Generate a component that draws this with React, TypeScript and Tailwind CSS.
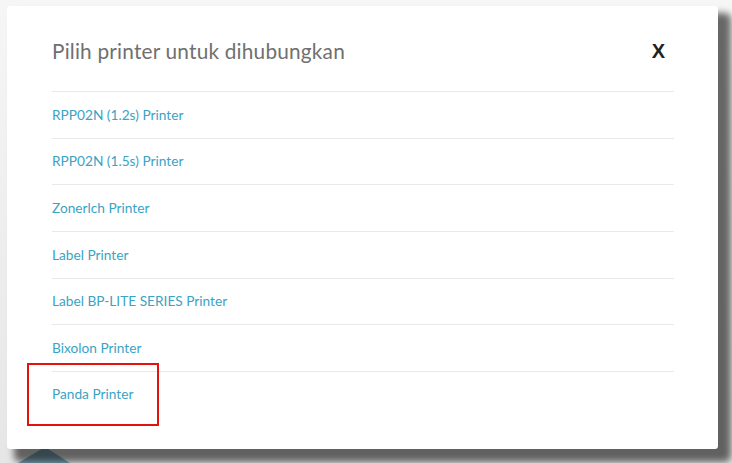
import React from "react";

const printers = [
  "RPP02N (1.2s) Printer",
  "RPP02N (1.5s) Printer",
  "Zonerlch Printer",
  "Label Printer",
  "Label BP-LITE SERIES Printer",
  "Bixolon Printer",
  "Panda Printer",
];

export default function App() {
  return (
    <div
      className="relative w-[732px] h-[463px] overflow-hidden bg-gradient-to-b from-[#f6f6f6] to-[#e6e6e6]"
      style={{ fontFamily: "Lato, 'Open Sans', sans-serif" }}
    >
      <svg className="absolute left-0 bottom-0" width="120" height="20" viewBox="0 0 120 20">
        <polygon points="18,20 45,4 70,20" fill="#7fa7b8" />
      </svg>
      <div className="relative ml-[7px] mt-[6px] w-[711px] h-[443px] bg-white rounded-[3px] shadow-[10px_10px_7px_3px_rgba(0,0,0,0.58)] pl-[45px] pr-[44px]">
        <div className="flex items-center justify-between h-[85px] pt-[4px]">
          <div className="text-[20.8px] text-[#707070] tracking-[0.2px]">Pilih printer untuk dihubungkan</div>
          <div className="mr-[9px] text-[20px] leading-none text-[#222] font-bold" style={{ fontFamily: "'Liberation Sans', Arial, sans-serif" }}>X</div>
        </div>
        <div className="flex flex-col">
          {printers.map((p) => (
            <div key={p} className="h-[46.667px] border-t border-[#e9e9e9] flex items-center text-[13.7px] text-[#3ba3c4]">
              {p}
            </div>
          ))}
        </div>
        <div className="absolute left-[20px] top-[357px] w-[132px] h-[63px] border-2 border-[#e3120b]" />
      </div>
    </div>
  );
}
